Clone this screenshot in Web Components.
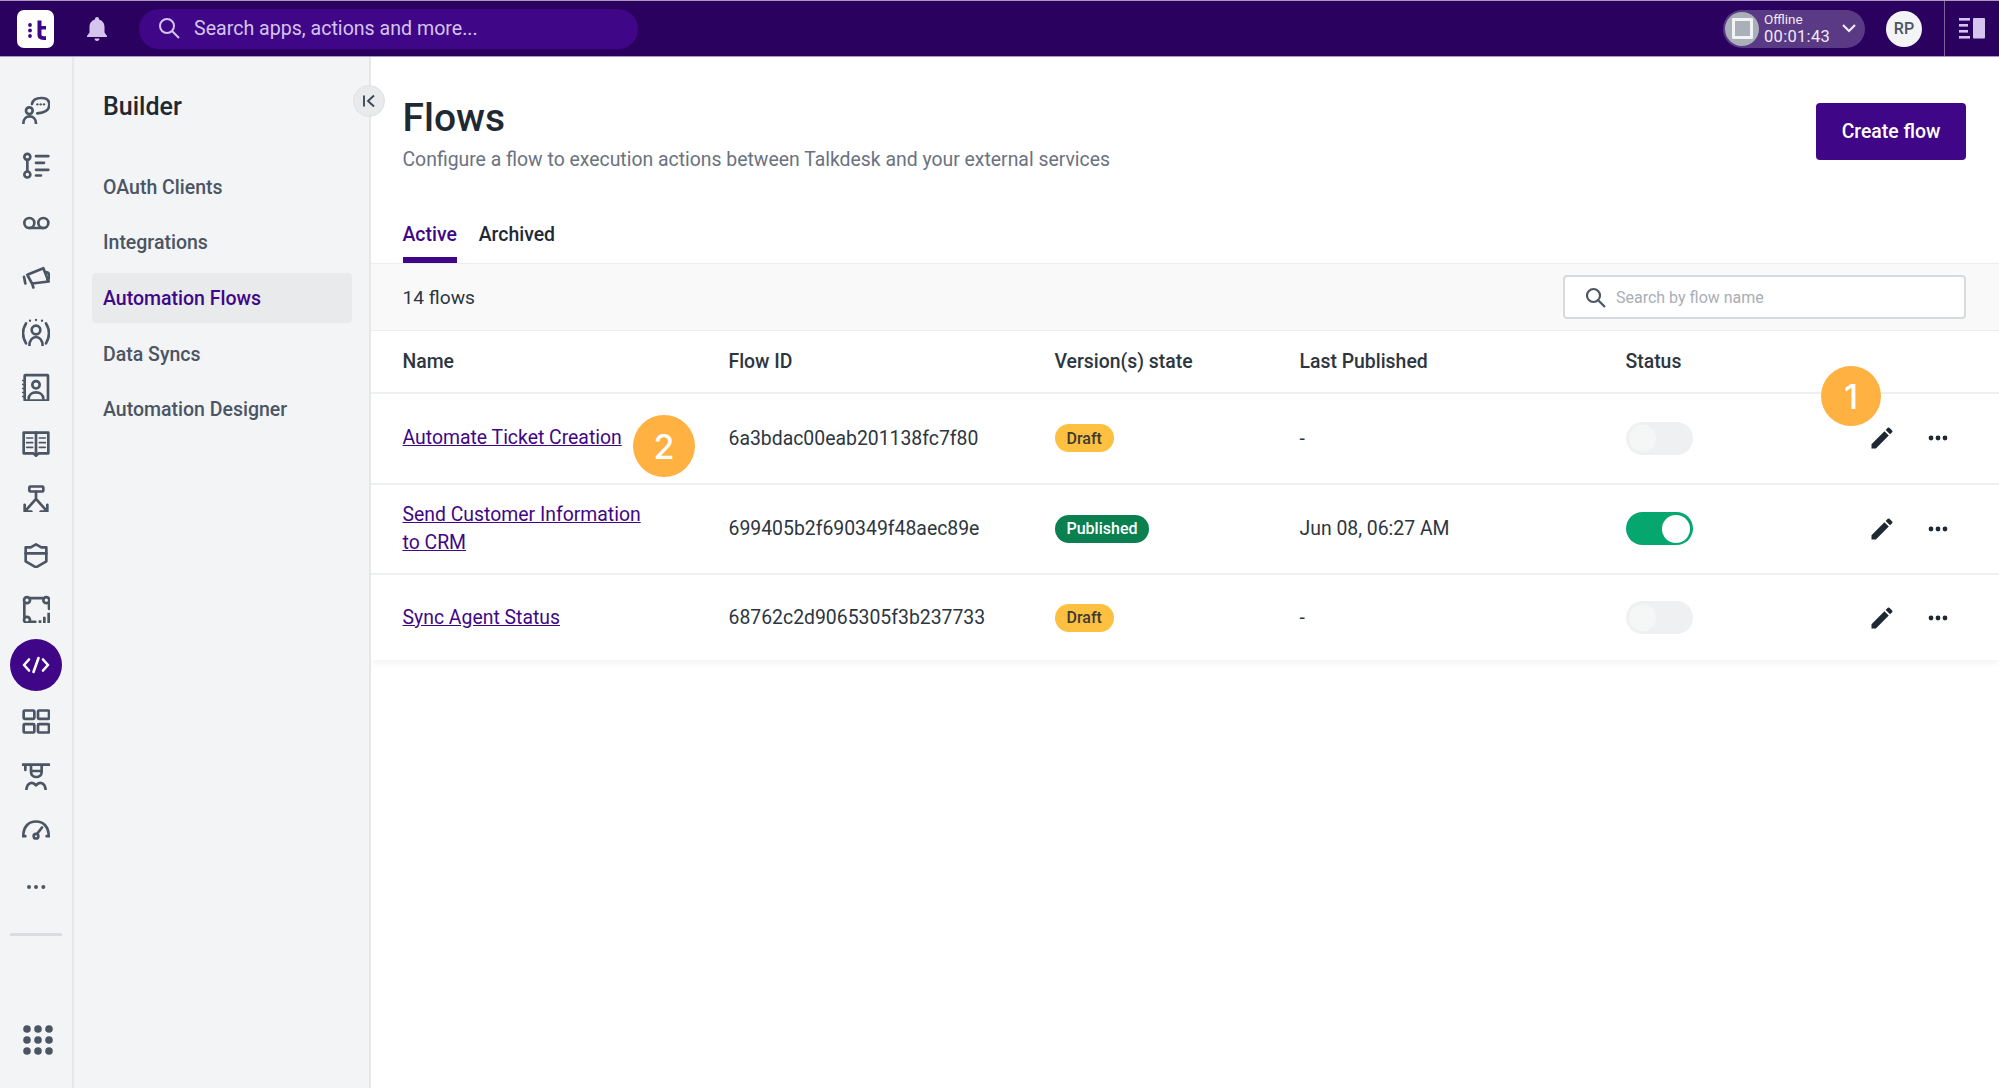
<!DOCTYPE html>
<html lang="en"><head><meta charset="utf-8"><title>Flows</title>
<style>
html,body{margin:0;height:100%;overflow:hidden;background:#fff}
body{font-family:Roboto,"Liberation Sans",sans-serif;color:#1f2933}
</style></head><body>
<app-shell>
  <app-topbar slot="top"></app-topbar>
  <app-rail slot="rail"></app-rail>
  <app-sidebar slot="side" heading="Builder">
    <nav-item>OAuth Clients</nav-item>
    <nav-item>Integrations</nav-item>
    <nav-item active>Automation Flows</nav-item>
    <nav-item>Data Syncs</nav-item>
    <nav-item>Automation Designer</nav-item>
  </app-sidebar>
  <flows-page slot="main">
    <flow-row name="Automate Ticket Creation" flow-id="6a3bdac00eab201138fc7f80" state="Draft" published="-"><step-marker n="1" style="left:1450px;top:-28px"></step-marker><step-marker n="2" wide style="left:262px;top:21px"></step-marker></flow-row>
    <flow-row name="Send Customer Information to CRM" flow-id="699405b2f690349f48aec89e" state="Published" published="Jun 08, 06:27 AM" on></flow-row>
    <flow-row name="Sync Agent Status" flow-id="68762c2d9065305f3b237733" state="Draft" published="-"></flow-row>
  </flows-page>
</app-shell>
<script>
const def=(name,html,init)=>customElements.define(name,class extends HTMLElement{
  connectedCallback(){ if(this.shadowRoot) return; const r=this.attachShadow({mode:'open'}); r.innerHTML=typeof html==='function'?html(this):html; if(init) init(this,r);}
});
def('app-shell',`<style>
:host{display:flex;flex-direction:column;height:1088px;width:1999px}
.b{display:flex;flex:1;min-height:0}
</style><slot name="top"></slot><div class="b"><slot name="rail"></slot><slot name="side"></slot><slot name="main"></slot></div>`);

def('app-topbar',`<style>
:host{display:flex;align-items:center;height:55px;background:#2a015f;border-top:1px solid #a999c0;border-bottom:1px solid #a999c0;flex:none;position:relative}
.logo{width:37px;height:38px;margin-left:17px;background:#fff;border-radius:7px;display:block}
.bell{margin-left:32px;width:22px;height:24px;display:block}
.search{margin-left:31px;width:499px;height:40px;border-radius:20px;background:#3f0787;display:flex;align-items:center;color:#d5c4ee;font-size:19.600px;box-sizing:border-box;padding-left:19px}
.search svg{width:23px;height:23px;margin-right:13px}
.right{margin-left:auto;display:flex;align-items:center;height:100%}
.pill{width:142px;height:38px;border-radius:19px;background:#5a3a85;display:flex;align-items:center;position:relative;box-sizing:border-box}
.rec{width:34px;height:34px;margin-left:2px;border-radius:50%;background:#aab0b8;display:flex;align-items:center;justify-content:center}
.rec i{display:block;width:15px;height:15px;border:3px solid #f2f3f4;border-radius:1px}
.t{margin-left:5px;color:#f0ebf6;display:flex;flex-direction:column}
.t b{font-weight:400;font-size:13.500px;line-height:15px}
.t span{font-size:16.500px;line-height:19px;letter-spacing:.3px}
.chev{position:absolute;right:9px;top:14px}
.av{width:36px;height:36px;margin-left:21px;border-radius:50%;background:#f3f4f6;color:#4b5563;font-size:16px;font-weight:500;display:flex;align-items:center;justify-content:center}
.sep{width:1px;height:100%;background:#7b659c;margin-left:22px}
.pn{margin:0 13px 0 14px;display:block}
</style>
<svg class="logo" viewBox="0 0 37 38"><g fill="#3f0787"><circle cx="13" cy="15" r="1.900"/><circle cx="13" cy="20.500" r="1.900"/><circle cx="13" cy="26" r="1.900"/><path d="M20.500 10.500h4v5.500h4.500v3.500h-4.500v5c0 1.300.7 1.800 4.500 1.800v3.700c-6 0-8.500-1.200-8.500-5.500z"/></g></svg>
<svg class="bell" viewBox="0 0 22 24"><path fill="#d5c4ee" d="M11 0c1.200 0 2 .8 2 2v.6c3.500 1 5.500 4 5.500 7.400v5.500L21 19v1H1v-1l2.500-3.500V10c0-3.400 2-6.400 5.500-7.400V2c0-1.200.8-2 2-2zM8.500 21.500h5c0 1.500-1 2.500-2.500 2.500s-2.500-1-2.500-2.500z"/></svg>
<div class="search"><svg viewBox="0 0 23 23" fill="none" stroke="#d5c4ee" stroke-width="2"><circle cx="9" cy="9" r="7"/><path d="M14 14l7 7"/></svg><span>Search apps, actions and more...</span></div>
<div class="right">
 <div class="pill"><div class="rec"><i></i></div><div class="t"><b>Offline</b><span>00:01:43</span></div>
  <svg class="chev" width="14" height="9" viewBox="0 0 14 9" fill="none" stroke="#f0ebf6" stroke-width="2.200"><path d="M1 1l6 6 6-6"/></svg></div>
 <div class="av">RP</div><div class="sep"></div>
 <svg class="pn" width="27" height="21" viewBox="0 0 27 21" fill="#d5c4ee"><rect width="11" height="2.600" x="0" y="0"/><rect width="9" height="2.600" x="0" y="6"/><rect width="9" height="2.600" x="0" y="12"/><rect width="11" height="2.600" x="0" y="18"/><rect width="12" height="20.600" x="14" y="0" rx="1"/></svg>
</div>`);

const I=(vb,body)=>`<svg width="28" height="28" viewBox="${vb}" fill="none" stroke="#4b5563" stroke-width="8" stroke-linecap="round" stroke-linejoin="round">${body}</svg>`;
const dot=(x,y,r=3.5)=>`<circle cx="${x}" cy="${y}" r="${r}" fill="#4b5563" stroke="none"/>`;
const railIcons=[
 I('66 48 84 84',`<circle cx="88" cy="92" r="10"/><path d="M70 131C70 102 108 102 108 131"/><path d="M96 72C98 60 110 54 124 54C140 54 148 62 148 74C148 90 134 98 112 100"/>${dot(112,73)}${dot(122,73)}${dot(132,73)}`),
 I('66 214.500 84 84',`<circle cx="82" cy="232" r="9"/><circle cx="82" cy="285" r="9"/><path d="M82 241V276M108 230H145M108 250H132M108 271H145M108 288H123"/>`),
 I('66 381 84 84',`<circle cx="88" cy="429" r="15"/><circle cx="130" cy="429" r="15"/><path d="M88 444H130"/>`),
 I('66 547.500 84 84',`<path d="M82 586L130 566L146 606L96 612Z"/><path d="M72 592L76 612M97 614L100 624M137 578C150 578 152 596 142 600"/>`),
 I('66 714 84 84',`<circle cx="108" cy="750" r="13"/><path d="M88 798C88 762 128 762 128 798M78 730C66 750 66 770 78 790M138 730C150 750 150 770 138 790"/>${dot(90,722)}${dot(108,720)}${dot(126,722)}`),
 I('66 40.500 84 84',`<rect x="74" y="47" width="70" height="76" rx="2"/><circle cx="108" cy="76" r="11"/><path d="M86 118C86 92 130 92 130 118" /><path stroke-width="4" d="M67 63H74M67 75H74M67 87H74M67 99H74M67 111H74"/>`),
 I('66 207 84 84',`<path d="M71 218H145V280H116L108 287L100 280H71Z"/><path d="M108 218V280"/><path stroke-width="5" d="M80 234H98M80 248H98M80 262H98M118 234H136M118 248H136M118 262H136"/>`),
 I('66 373.500 84 84',`<rect x="88" y="381" width="42" height="15" rx="3"/><path d="M108 397V418L78 452M108 418L138 452M74 436V456H94M142 436V456H122"/>`),
 I('66 540 84 84',`<path d="M77 562L92 562L108 553L124 562L139 562V604L108 622L77 604Z"/><path d="M77 580H139"/>`),
 I('66 706.500 84 84',`<circle cx="81" cy="722" r="9"/><circle cx="139" cy="722" r="9"/><circle cx="81" cy="781" r="9"/><path d="M90 716H130M73 731V772M147 731V748M90 787H106"/><path d="M120 792V782M133 792V772M146 792V760" stroke-linecap="butt"/>`),
 null,
 I('66 199.500 84 84',`<rect x="71" y="213" width="32" height="25" rx="3"/><rect x="114" y="213" width="33" height="25" rx="3"/><rect x="71" y="254" width="32" height="25" rx="3"/><rect x="114" y="254" width="33" height="25" rx="3"/>`),
 I('66 366 84 84',`<path d="M68 374H148M76 374V390M93 374V396C93 416 125 416 125 396V374M93 393H125M79 450C81 426 98 424 108 436C118 424 135 426 137 450"/>`),
 I('66 532.500 84 84',`<path d="M70 588C70 562 86 546 108 546C130 546 146 562 146 588M68 590H76M140 590H148M112 582L126 564"/><circle cx="108" cy="590" r="7"/>`),
 `<svg width="28" height="28" viewBox="66 699 84 84">${dot(87,741,6)}${dot(108,741,6)}${dot(130,741,6)}</svg>`
];
def('app-rail',`<style>
:host{display:flex;flex-direction:column;align-items:center;width:72px;flex:none;background:#f3f4f6;border-right:2px solid #e5e7ea;padding-top:25px;box-sizing:content-box}
.it{height:55.500px;width:100%;display:flex;align-items:center;justify-content:center;flex:none}
.act{width:52px;height:52px;border-radius:50%;background:#3f0787;display:flex;align-items:center;justify-content:center}
hr{border:0;height:3px;width:52px;background:#dadcdf;margin:18px 0 0}
.g{margin-top:auto;margin-bottom:32px;display:block;margin-left:3px}
</style><div class="rail-list" id="l" style="display:contents"></div><hr><svg class="g" width="32" height="32" viewBox="0 0 32 32" fill="#4b5563">
<circle cx="5" cy="5" r="3.800"/><circle cx="16" cy="5" r="3.800"/><circle cx="27" cy="5" r="3.800"/><circle cx="5" cy="16" r="3.800"/><circle cx="16" cy="16" r="3.800"/><circle cx="27" cy="16" r="3.800"/><circle cx="5" cy="27" r="3.800"/><circle cx="16" cy="27" r="3.800"/><circle cx="27" cy="27" r="3.800"/></svg>`,
(h,r)=>{r.getElementById('l').innerHTML=railIcons.map(x=>x?`<div class="it">${x}</div>`:`<div class="it"><div class="act"><svg width="28" height="28" viewBox="0 0 28 28" fill="none" stroke="#fff" stroke-width="2.600" stroke-linecap="round" stroke-linejoin="round"><path d="M7 8.500L2 14L7 19.500M21 8.500L26 14L21 19.500M16.500 7L11.500 21"/></svg></div></div>`).join('');});

def('app-sidebar',h=>`<style>
:host{display:block;width:297px;flex:none;background:#f3f4f6;border-right:2px solid #e5e7ea;position:relative;box-sizing:border-box;padding:33px 18px 0 18px}
h2{margin:0 0 38px 11px;font-size:25px;line-height:34px;font-weight:500;color:#1f2933}
.c{position:absolute;left:279px;top:28px;width:32px;height:32px;border-radius:50%;background:#e9eaec;border:1px solid #dfe1e4;box-sizing:border-box;display:flex;align-items:center;justify-content:center}
</style><h2>${h.getAttribute('heading')}</h2><slot></slot><div class="c"><svg width="14" height="14" viewBox="0 0 14 14" fill="none" stroke="#374151" stroke-width="1.800"><path d="M2 1.500V12.500M12 1.500L6 7L12 12.500"/></svg></div>`);
def('nav-item',h=>`<style>
:host{display:flex;align-items:center;height:50px;margin-bottom:5.700px;padding-left:11px;border-radius:4px;font-size:19.500px;font-weight:500;color:#4b5563;width:260px;box-sizing:border-box}
:host([active]){background:#e9eaec;color:#3f0787}
</style><slot></slot>`);

def('flows-page',`<style>
:host{display:block;flex:1;min-width:0;background:#fff}
.h{display:flex;justify-content:space-between;padding:39px 33px 0 31.500px}
h1{margin:0;font-size:39px;line-height:44px;font-weight:500;color:#1f2933}
p{margin:8px 0 0;font-size:19.400px;line-height:24px;color:#6b7280}
.btn{margin-top:7px;width:150px;height:57px;background:#3f0787;color:#fff;border-radius:4px;font-size:19.400px;font-weight:500;display:flex;align-items:center;justify-content:center}
.tabs{display:flex;gap:22px;padding:0 31.500px;margin-top:51px;font-size:19.400px;font-weight:500;line-height:24px;color:#1f2933}
.tabs span{padding-bottom:10px}
.tabs .on{color:#3f0787;border-bottom:6px solid #3f0787}
.bar{display:flex;align-items:center;justify-content:space-between;height:66px;background:#f9f9f9;border-top:1px solid #ececee;border-bottom:1px solid #ececee;padding:0 33px 0 31.500px;font-size:19.200px;color:#2d3640}
.sb{width:403px;height:44px;box-sizing:border-box;background:#fff;border:2px solid #d7dbe0;border-radius:4px;display:flex;align-items:center;padding-left:20px;color:#a9aeb6;font-size:16px}
.sb svg{margin-right:10px}
.thead{display:grid;grid-template-columns:326px 326px 245px 326px 1fr;align-items:center;padding:0 0 0 31.500px;font-size:19.400px;font-weight:500;color:#2d3640;border-bottom:2px solid #eeeff1;box-sizing:border-box;height:63px}
.rows{box-shadow:0 4px 5px rgba(0,0,0,.04)}
</style>
<div class="h"><div><h1>Flows</h1><p>Configure a flow to execution actions between Talkdesk and your external services</p></div><div class="btn">Create flow</div></div>
<div class="tabs"><span class="on">Active</span><span>Archived</span></div>
<div class="bar"><span>14 flows</span><div class="sb"><svg width="21" height="21" viewBox="0 0 21 21" fill="none" stroke="#4b5563" stroke-width="2.200"><circle cx="8.500" cy="8.500" r="6.500"/><path d="M13.500 13.500L20 20"/></svg><span>Search by flow name</span></div></div>
<div class="thead"><span>Name</span><span>Flow ID</span><span>Version(s) state</span><span>Last Published</span><span>Status</span></div>
<div class="rows"><slot></slot></div>`);

def('flow-row',h=>{const st=h.getAttribute('state');return `<style>
:host{display:grid;grid-template-columns:326px 326px 245px 326px 242.500px 1fr;height:90.500px;align-items:center;padding-left:31.500px;font-size:19.400px;color:#2d3640;border-bottom:2px solid #eeeff1;box-sizing:border-box;position:relative}
:host(:last-of-type){border-bottom:0;height:85px;padding-bottom:0}
a{color:#3f0787;text-decoration:underline;line-height:28px;display:block;width:250px}
.b{display:inline-flex;align-items:center;height:28px;padding:0 12px;border-radius:14px;font-size:16px;font-weight:500;background:#fdc040;color:#3b3a33;justify-self:start}
.b.p{background:#0a7f4f;color:#fff}
.acts{display:flex;align-items:center}
.acts svg{display:block}
.more{margin-left:32px}
</style>
<a>${h.getAttribute('name')}</a><span>${h.getAttribute('flow-id')}</span>
<span class="b ${st==='Published'?'p':''}">${st}</span><span>${h.getAttribute('published')}</span>
<toggle-switch ${h.hasAttribute('on')?'on':''}></toggle-switch>
<div class="acts"><svg width="28" height="28" viewBox="0 0 24 24" fill="#1f2933"><path d="M3 17.250V21h3.750L17.810 9.940l-3.750-3.750L3 17.250zM20.710 7.040a1 1 0 0 0 0-1.410l-2.340-2.340a1 1 0 0 0-1.410 0l-1.830 1.830 3.750 3.750 1.830-1.830z"/></svg>
<svg class="more" width="20" height="6" viewBox="0 0 20 6" fill="#1f2933"><circle cx="3" cy="3" r="2.400"/><circle cx="10" cy="3" r="2.400"/><circle cx="17" cy="3" r="2.400"/></svg></div><slot></slot>`});
def('toggle-switch',`<style>
:host{display:block;width:67px;height:33px;border-radius:17px;background:#eff0f2;position:relative;box-sizing:border-box}
:host::after{content:"";position:absolute;left:3px;top:3px;width:27px;height:27px;border-radius:50%;background:#f5f6f6}
:host([on]){background:#05a76f}
:host([on])::after{left:36px;background:#fff;width:28px;height:28px;top:2.500px}
</style>`);
def('step-marker',h=>`<style>
:host{position:absolute;display:flex;align-items:center;justify-content:center;width:60px;height:60px;border-radius:50%;background:#ffb142;color:#fff;font-family:Inter,sans-serif;font-weight:500;font-size:34px;z-index:5}
:host([wide]){width:62px;height:62px}
</style>${h.getAttribute('n')}`);
</script>
</body></html>
